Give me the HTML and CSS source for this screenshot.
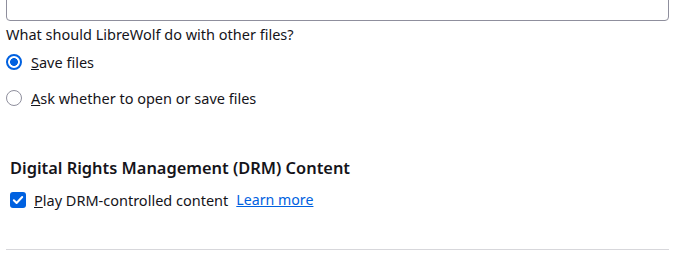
FILE: index.html
```html
<!DOCTYPE html>
<html lang="en">
<head>
    <meta charset="UTF-8">
    <title>Settings</title>
    <link rel="stylesheet" href="styles.css">
</head>
<body>
    <div class="pane">
        <div class="search-box"></div>

        <div class="label">What should LibreWolf do with other files?</div>
        <div class="radio-group">
            <label class="radio-row">
                <span class="radio checked"></span>
                <span><u>S</u>ave files</span>
            </label>
            <label class="radio-row">
                <span class="radio"></span>
                <span><u>A</u>sk whether to open or save files</span>
            </label>
        </div>

        <div class="group">
            <h2 class="group-title">Digital Rights Management (DRM) Content</h2>
            <label class="check-row">
                <span class="checkbox">
                    <svg width="16" height="16" viewBox="0 0 16 16">
                        <path d="M3.8 8.2 L6.6 11 L12.2 5" fill="none" stroke="#fff" stroke-width="2" stroke-linecap="round" stroke-linejoin="round"/>
                    </svg>
                </span>
                <span class="check-text"><u>P</u>lay DRM-controlled content</span>
                <a class="learn-more" href="#">Learn more</a>
            </label>
        </div>

        <hr class="separator">
    </div>
</body>
</html>
```

FILE: styles.css
```css
body {
    margin: 0;
    background-color: #fff;
    font-family: 'Noto Sans', sans-serif;
    font-size: 14.5px;
    color: #15141a;
}

.pane {
    padding: 0 25px 0 6px;
}

.search-box {
    height: 30px;
    margin-top: -11px;
    border: 1px solid #8f8f9d;
    border-radius: 4px;
}

.label {
    margin-top: 3px;
    line-height: 20px;
}

.radio-group {
    display: flex;
    flex-direction: column;
}

.radio-row {
    display: flex;
    align-items: center;
    gap: 9px;
    height: 36px;
}

.radio {
    width: 16px;
    height: 16px;
    border: 1px solid #8f8f9d;
    border-radius: 50%;
    box-sizing: border-box;
    flex-shrink: 0;
}

.radio.checked {
    border: 2px solid #0061e0;
    background: radial-gradient(circle, #0061e0 0 3.6px, #fff 4.2px);
}

.group {
    margin-top: 41px;
    padding-left: 4px;
}

.group-title {
    margin: 0;
    font-size: 16.4px;
    font-weight: 600;
    line-height: 22px;
}

.check-row {
    display: flex;
    align-items: center;
    margin-top: 11px;
    line-height: 20px;
}

.checkbox {
    width: 16px;
    height: 16px;
    background-color: #0061e0;
    border-radius: 3px;
    display: flex;
    margin-right: 8px;
}

.check-text {
    margin-right: 8px;
}

.learn-more {
    color: #0061e0;
    font-size: 14.2px;
}

.separator {
    margin: 39px 0 0;
    border: none;
    border-top: 1px solid #d7d7db;
}
```
